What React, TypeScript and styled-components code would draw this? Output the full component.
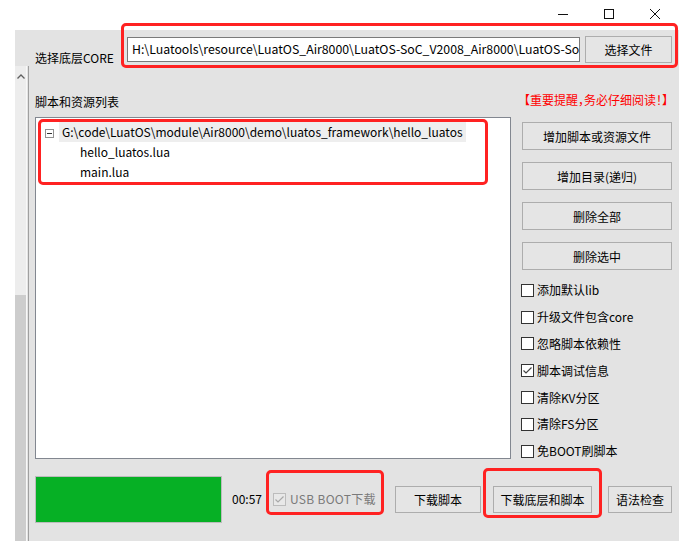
import React from 'react';
import styled, { createGlobalStyle } from 'styled-components';

const GlobalStyle = createGlobalStyle`
  html, body {
    margin: 0;
    padding: 0;
    background: #ffffff;
  }
  body {
    font-family: 'Noto Sans CJK SC', 'Noto Sans', sans-serif;
    font-size: 12px;
    color: #000;
  }
  * {
    box-sizing: border-box;
  }
`;

const Window = styled.div`
  position: relative;
  width: 695px;
  height: 541px;
  overflow: hidden;
  display: flex;
  flex-direction: column;
  background: #ffffff;
`;

const TitleBar = styled.div`
  height: 30px;
  display: flex;
  justify-content: flex-end;
  align-items: flex-start;
  padding-right: 17px;
`;

const TitleButton = styled.div`
  width: 46px;
  height: 27px;
  display: flex;
  align-items: center;
  justify-content: center;
`;

const Panel = styled.div`
  flex: 1;
  width: 664px;
  margin-left: 15px;
  background: #e3e3e3;
  display: flex;
  flex-direction: column;
`;

const CoreRow = styled.div`
  height: 36px;
  display: flex;
  align-items: flex-start;
  padding-left: 20px;
`;

const FieldLabel = styled.div`
  width: 92px;
  margin-top: 20px;
  line-height: 16px;
  white-space: nowrap;
`;

const PathBox = styled.div`
  width: 453px;
  height: 25px;
  margin-top: 7px;
  padding: 0 4px;
  background: #ffffff;
  border: 1px solid #7a7a7a;
  line-height: 23px;
  font-size: 12.3px;
  white-space: nowrap;
  overflow: hidden;
`;

const Button = styled.div<{ $w: number; $h?: number; $ml?: number; $mt?: number }>`
  width: ${({ $w }) => $w}px;
  height: ${({ $h }) => $h ?? 28}px;
  margin-left: ${({ $ml }) => $ml ?? 0}px;
  margin-top: ${({ $mt }) => $mt ?? 0}px;
  background: #e5e5e5;
  border: 1px solid #adadad;
  display: flex;
  align-items: center;
  justify-content: center;
  white-space: nowrap;
  flex-shrink: 0;
`;

const Lower = styled.div`
  flex: 1;
  display: flex;
`;

const ScrollBar = styled.div`
  width: 12px;
  display: flex;
  flex-direction: column;
  background: #ededed;
  border-right: 1px solid #f8f8f8;
`;

const ScrollTrack = styled.div`
  height: 229px;
  display: flex;
  justify-content: center;
  padding-top: 8px;
`;

const ScrollThumb = styled.div`
  flex: 1;
  background: #cdcdcd;
`;

const Divider = styled.div`
  width: 2px;
  border-right: 1px solid #a0a0a0;
`;

const Content = styled.div`
  flex: 1;
  display: flex;
  flex-direction: column;
  padding: 0 7px 0 6px;
`;

const SectionHeader = styled.div`
  height: 51px;
  display: flex;
  justify-content: space-between;
  align-items: flex-end;
`;

const SectionLabel = styled.div`
  line-height: 16px;
  margin-bottom: 7px;
`;

const Notice = styled.div`
  color: #ff0000;
  line-height: 16px;
  margin-bottom: 9px;
  margin-right: 4px;
  font-feature-settings: 'halt';
  white-space: nowrap;
`;

const MainRow = styled.div`
  display: flex;
`;

const FileList = styled.div`
  width: 476px;
  height: 342px;
  background: #ffffff;
  border: 1px solid #828790;
  padding: 4px 0 0 9px;
`;

const TreeRow = styled.div<{ $child?: boolean }>`
  height: 20px;
  display: flex;
  align-items: center;
  padding-left: ${({ $child }) => ($child ? 32 : 0)}px;
  white-space: nowrap;
`;

const Expander = styled.div`
  width: 9px;
  height: 9px;
  margin-top: 2px;
  border: 1px solid #919191;
  background: #ffffff;
  display: flex;
  align-items: center;
  justify-content: center;
  &::after {
    content: '';
    width: 5px;
    height: 1px;
    background: #333;
  }
`;

const NodeText = styled.div<{ $selected?: boolean }>`
  height: 20px;
  line-height: 20px;
  padding: 0 3px;
  margin-left: ${({ $selected }) => ($selected ? 5 : 0)}px;
  background: ${({ $selected }) => ($selected ? '#eeeeee' : 'transparent')};
`;

const SideColumn = styled.div`
  width: 150px;
  margin-left: 11px;
  padding-top: 5px;
  display: flex;
  flex-direction: column;
`;

const ButtonStack = styled.div`
  display: flex;
  flex-direction: column;
  gap: 12px;
`;

const OptionList = styled.div`
  margin-top: 7px;
  margin-left: -1px;
  display: flex;
  flex-direction: column;
`;

const Option = styled.div`
  height: 26.8px;
  display: flex;
  align-items: center;
  white-space: nowrap;
`;

const Box = styled.div<{ $disabled?: boolean }>`
  width: 13px;
  height: 13px;
  flex-shrink: 0;
  border: 1px solid ${({ $disabled }) => ($disabled ? '#bcbcbc' : '#333333')};
  background: ${({ $disabled }) => ($disabled ? '#e8e8e8' : '#ffffff')};
  display: flex;
  align-items: center;
  justify-content: center;
`;

const OptionLabel = styled.span<{ $disabled?: boolean }>`
  margin-left: ${({ $disabled }) => ($disabled ? 4 : 3)}px;
  line-height: 16px;
  color: ${({ $disabled }) => ($disabled ? '#7a7a7a' : '#000000')};
  letter-spacing: ${({ $disabled }) => ($disabled ? '0.3px' : '0')};
`;

const BottomRow = styled.div`
  display: flex;
  align-items: center;
  padding-top: 11px;
`;

const Progress = styled.div`
  width: 187px;
  height: 47px;
  background: #06b025;
  border: 1px solid #bcbcbc;
`;

const Timer = styled.div`
  width: 41px;
  margin-left: 10px;
  line-height: 16px;
`;

const UsbOption = styled.div`
  width: 122px;
  display: flex;
  align-items: center;
  white-space: nowrap;
`;

const Highlight = styled.div<{ $x: number; $y: number; $w: number; $h: number }>`
  position: absolute;
  left: ${({ $x }) => $x}px;
  top: ${({ $y }) => $y}px;
  width: ${({ $w }) => $w}px;
  height: ${({ $h }) => $h}px;
  border: 3px solid #ff2222;
  border-radius: 5px;
  pointer-events: none;
`;

const Check = ({ color }: { color: string }) => (
  <svg width="11" height="11" viewBox="0 0 11 11">
    <polyline points="1.5,5.5 4,8 9.5,2.5" fill="none" stroke={color} strokeWidth="1.2" />
  </svg>
);

const options = [
  { label: '添加默认lib', checked: false },
  { label: '升级文件包含core', checked: false },
  { label: '忽略脚本依赖性', checked: false },
  { label: '脚本调试信息', checked: true },
  { label: '清除KV分区', checked: false },
  { label: '清除FS分区', checked: false },
  { label: '免BOOT刷脚本', checked: false },
];

const sideButtons = ['增加脚本或资源文件', '增加目录(递归)', '删除全部', '删除选中'];

const App = () => {
  return (
    <>
      <GlobalStyle />
      <Window>
        <TitleBar>
          <TitleButton>
            <svg width="10" height="10" viewBox="0 0 10 10">
              <line x1="0" y1="5.5" x2="10" y2="5.5" stroke="#111" strokeWidth="1" />
            </svg>
          </TitleButton>
          <TitleButton>
            <svg width="10" height="10" viewBox="0 0 10 10">
              <rect x="0.5" y="0.5" width="9" height="9" fill="none" stroke="#111" strokeWidth="1" />
            </svg>
          </TitleButton>
          <TitleButton>
            <svg width="10" height="10" viewBox="0 0 10 10">
              <path d="M0 0 L10 10 M10 0 L0 10" stroke="#111" strokeWidth="1" />
            </svg>
          </TitleButton>
        </TitleBar>

        <Panel>
          <CoreRow>
            <FieldLabel>选择底层CORE</FieldLabel>
            <PathBox>H:\Luatools\resource\LuatOS_Air8000\LuatOS-SoC_V2008_Air8000\LuatOS-So</PathBox>
            <Button $w={87} $h={27} $ml={5} $mt={6}>选择文件</Button>
          </CoreRow>

          <Lower>
            <ScrollBar>
              <ScrollTrack>
                <svg width="8" height="5" viewBox="0 0 8 5">
                  <polyline points="0.5,4.5 4,1 7.5,4.5" fill="none" stroke="#606060" strokeWidth="1.3" />
                </svg>
              </ScrollTrack>
              <ScrollThumb />
            </ScrollBar>
            <Divider />

            <Content>
              <SectionHeader>
                <SectionLabel>脚本和资源列表</SectionLabel>
                <Notice>【重要提醒，务必仔细阅读！】</Notice>
              </SectionHeader>

              <MainRow>
                <FileList>
                  <TreeRow>
                    <Expander />
                    <NodeText $selected>G:\code\LuatOS\module\Air8000\demo\luatos_framework\hello_luatos</NodeText>
                  </TreeRow>
                  <TreeRow $child>
                    <NodeText>hello_luatos.lua</NodeText>
                  </TreeRow>
                  <TreeRow $child>
                    <NodeText>main.lua</NodeText>
                  </TreeRow>
                </FileList>

                <SideColumn>
                  <ButtonStack>
                    {sideButtons.map((b) => (
                      <Button key={b} $w={150}>{b}</Button>
                    ))}
                  </ButtonStack>
                  <OptionList>
                    {options.map((o) => (
                      <Option key={o.label}>
                        <Box>{o.checked && <Check color="#444" />}</Box>
                        <OptionLabel>{o.label}</OptionLabel>
                      </Option>
                    ))}
                  </OptionList>
                </SideColumn>
              </MainRow>

              <BottomRow>
                <Progress />
                <Timer>00:57</Timer>
                <UsbOption>
                  <Box $disabled>
                    <Check color="#a8a8a8" />
                  </Box>
                  <OptionLabel $disabled>USB BOOT下载</OptionLabel>
                </UsbOption>
                <Button $w={86} $h={27}>下载脚本</Button>
                <Button $w={99} $h={27} $ml={12}>下载底层和脚本</Button>
                <Button $w={64} $h={27} $ml={16}>语法检查</Button>
              </BottomRow>
            </Content>
          </Lower>
        </Panel>

        <Highlight $x={121} $y={23} $w={557} $h={45} />
        <Highlight $x={38} $y={119} $w={450} $h={66} />
        <Highlight $x={266} $y={470} $w={118} $h={45} />
        <Highlight $x={483} $y={468} $w={119} $h={50} />
      </Window>
    </>
  );
};

export default App;
